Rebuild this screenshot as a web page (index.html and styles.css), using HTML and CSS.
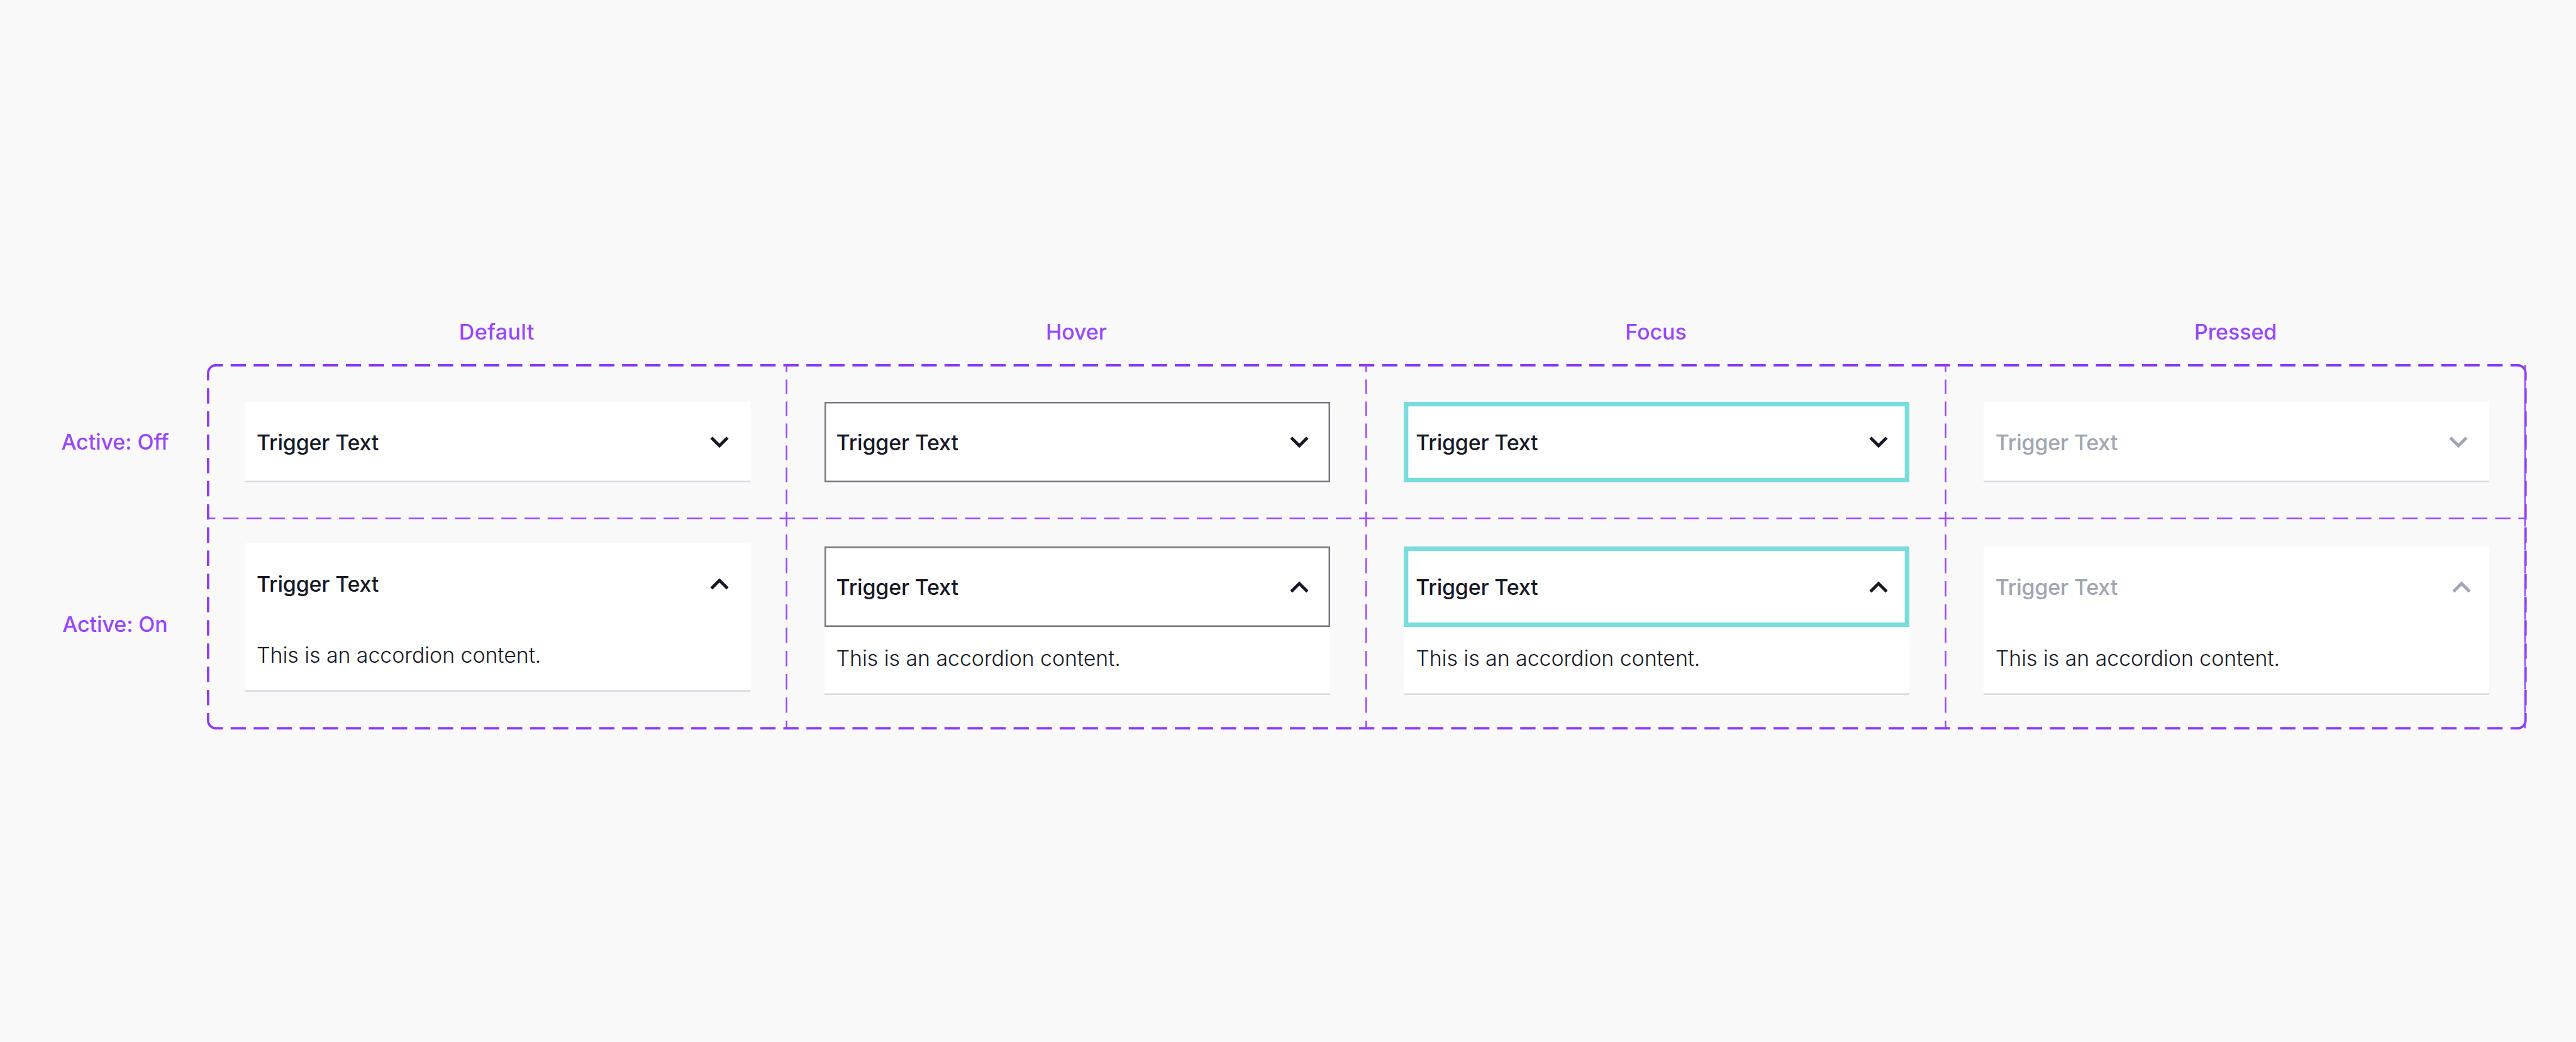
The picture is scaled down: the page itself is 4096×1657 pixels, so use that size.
FILE: index.html
```html
<!DOCTYPE html>
<html lang="en">
<head>
    <meta charset="UTF-8">
    <title>Accordion</title>
    <link rel="stylesheet" href="styles.css">
</head>
<body>
    <svg class="symbols">
        <symbol id="chevron-down" viewBox="0 0 30 19">
            <path d="M2.15 2 L15 14.85 L27.85 2"/>
        </symbol>
        <symbol id="chevron-up" viewBox="0 0 30 19">
            <path d="M2.15 16.7 L15 3.85 L27.85 16.7"/>
        </symbol>
    </svg>

    <main class="sheet">
        <div class="columns">
            <span class="label wide">Default</span>
            <span class="label">Hover</span>
            <span class="label">Focus</span>
            <span class="label">Pressed</span>
        </div>

        <div class="rows">
            <span class="label">Active: Off</span>
            <span class="label">Active: On</span>
        </div>

        <div class="board">
            <!-- dashed frame and grid lines -->
            <svg class="lines" viewBox="0 0 7118 1121">
                <g class="frame">
                    <path d="M3.5 50 V27.5 A24 24 0 0 1 27.5 3.5 H49"/>
                    <path d="M7068.5 3.5 H7090.5 A24 24 0 0 1 7114.5 27.5 V50"/>
                    <path d="M7114.5 1071 V1093.5 A24 24 0 0 1 7090.5 1117.5 H7068.5"/>
                    <path d="M49 1117.5 H27.5 A24 24 0 0 1 3.5 1093.5 V1071"/>
                    <path class="frame-x" d="M72.7 3.5 H7050 M72.7 1117.5 H7050"/>
                    <path class="frame-y" d="M3.5 73.7 V1060 M7114.5 73.7 V1060"/>
                </g>
                <g class="grid">
                    <path class="grid-x" d="M0 473.2 H7115"/>
                    <path class="grid-y1" d="M1778.4 2 V475.3 M3556.9 2 V475.3 M5335 2 V475.3 M7113 2 V475.3"/>
                    <path class="grid-y2" d="M1778.4 475.3 V1118 M3556.9 475.3 V1118 M5335 475.3 V1118 M7113 475.3 V1118"/>
                </g>
            </svg>

            <div class="accordion">
                <div class="trigger">Trigger Text<svg class="chevron"><use href="#chevron-down"/></svg></div>
            </div>
            <div class="accordion hover">
                <div class="trigger">Trigger Text<svg class="chevron"><use href="#chevron-down"/></svg></div>
            </div>
            <div class="accordion focus">
                <div class="trigger">Trigger Text<svg class="chevron"><use href="#chevron-down"/></svg></div>
            </div>
            <div class="accordion pressed">
                <div class="trigger">Trigger Text<svg class="chevron"><use href="#chevron-down"/></svg></div>
            </div>

            <div class="accordion open default-open">
                <div class="trigger">Trigger Text<svg class="chevron"><use href="#chevron-up"/></svg></div>
                <p class="content">This is an accordion content.</p>
            </div>
            <div class="accordion open hover">
                <div class="trigger">Trigger Text<svg class="chevron"><use href="#chevron-up"/></svg></div>
                <p class="content">This is an accordion content.</p>
            </div>
            <div class="accordion open focus">
                <div class="trigger">Trigger Text<svg class="chevron"><use href="#chevron-up"/></svg></div>
                <p class="content">This is an accordion content.</p>
            </div>
            <div class="accordion open pressed">
                <div class="trigger">Trigger Text<svg class="chevron"><use href="#chevron-up"/></svg></div>
                <p class="content">This is an accordion content.</p>
            </div>
        </div>
    </main>
</body>
</html>
```
FILE: styles.css
```css
* {
    margin: 0;
    padding: 0;
    box-sizing: border-box;
}

body {
    min-height: 1657px;
    background: #f9f9f9;
    font-family: Inter, 'Liberation Sans', sans-serif;
    font-size: 34px;
    line-height: 48px;
    color: #161826;
}

.symbols {
    display: none;
}

.sheet {
    display: grid;
    grid-template-columns: 329px 3689px;
    grid-template-rows: 75.4px 581px;
    padding-top: 504px;
}

.columns {
    grid-column: 2;
    display: grid;
    grid-template-columns: repeat(4, 921.6px);
    justify-items: center;
}

.label {
    color: #9747ff;
    font-weight: 500;
    letter-spacing: -0.1px;
}

.label.wide {
    letter-spacing: 0.4px;
}

.rows {
    display: grid;
    grid-template-rows: 245px 336px;
    align-items: center;
    justify-items: center;
    padding: 1px 0 0 37px;
}

.board {
    position: relative;
    display: grid;
    grid-template-columns: repeat(4, 921.6px);
    grid-template-rows: 290px 291px;
    align-items: start;
}

.lines {
    position: absolute;
    top: 0;
    left: 0;
    width: 3688.7px;
    height: 580.9px;
    fill: none;
}

.frame {
    stroke: #8a38f5;
    stroke-width: 7.07;
}

.frame-x {
    stroke-dasharray: 46.9 23.76;
}

.frame-y {
    stroke-dasharray: 47.3 23.92;
}

.grid {
    stroke: #9747ff;
    stroke-width: 4.72;
}

.grid-x {
    stroke-dasharray: 47.3 23.84;
    stroke-dashoffset: 21.7;
}

.grid-y1 {
    stroke-dasharray: 45.1 22.52;
    stroke-dashoffset: 22.5;
}

.grid-y2 {
    stroke-dasharray: 47.4 24;
    stroke-dashoffset: 23.7;
}

.accordion {
    width: 804px;
    margin: 60px 0 0 60px;
    background: #fff;
    box-shadow: inset 0 -2.5px #d8dae2;
}

.accordion.open {
    height: 236px;
    margin-top: 0;
}

.default-open {
    transform: translateY(-5px);
}

.trigger {
    display: flex;
    align-items: center;
    justify-content: space-between;
    height: 128px;
    padding: 2px 34px 0 19px;
    font-weight: 500;
    letter-spacing: -0.2px;
}

.hover .trigger {
    box-shadow: inset 0 0 0 2.45px #757680;
}

.focus .trigger {
    box-shadow: inset 0 0 0 7.33px #7adcdb;
}

.pressed .trigger {
    color: #9fa5b2;
}

.chevron {
    width: 30px;
    height: 19px;
    margin-top: -2px;
    fill: none;
    stroke: currentColor;
    stroke-width: 4.9;
}

.open.pressed .chevron {
    margin-right: -5px;
}

.content {
    padding: 26px 19px;
    font-weight: 350;
    letter-spacing: -0.1px;
}
```
